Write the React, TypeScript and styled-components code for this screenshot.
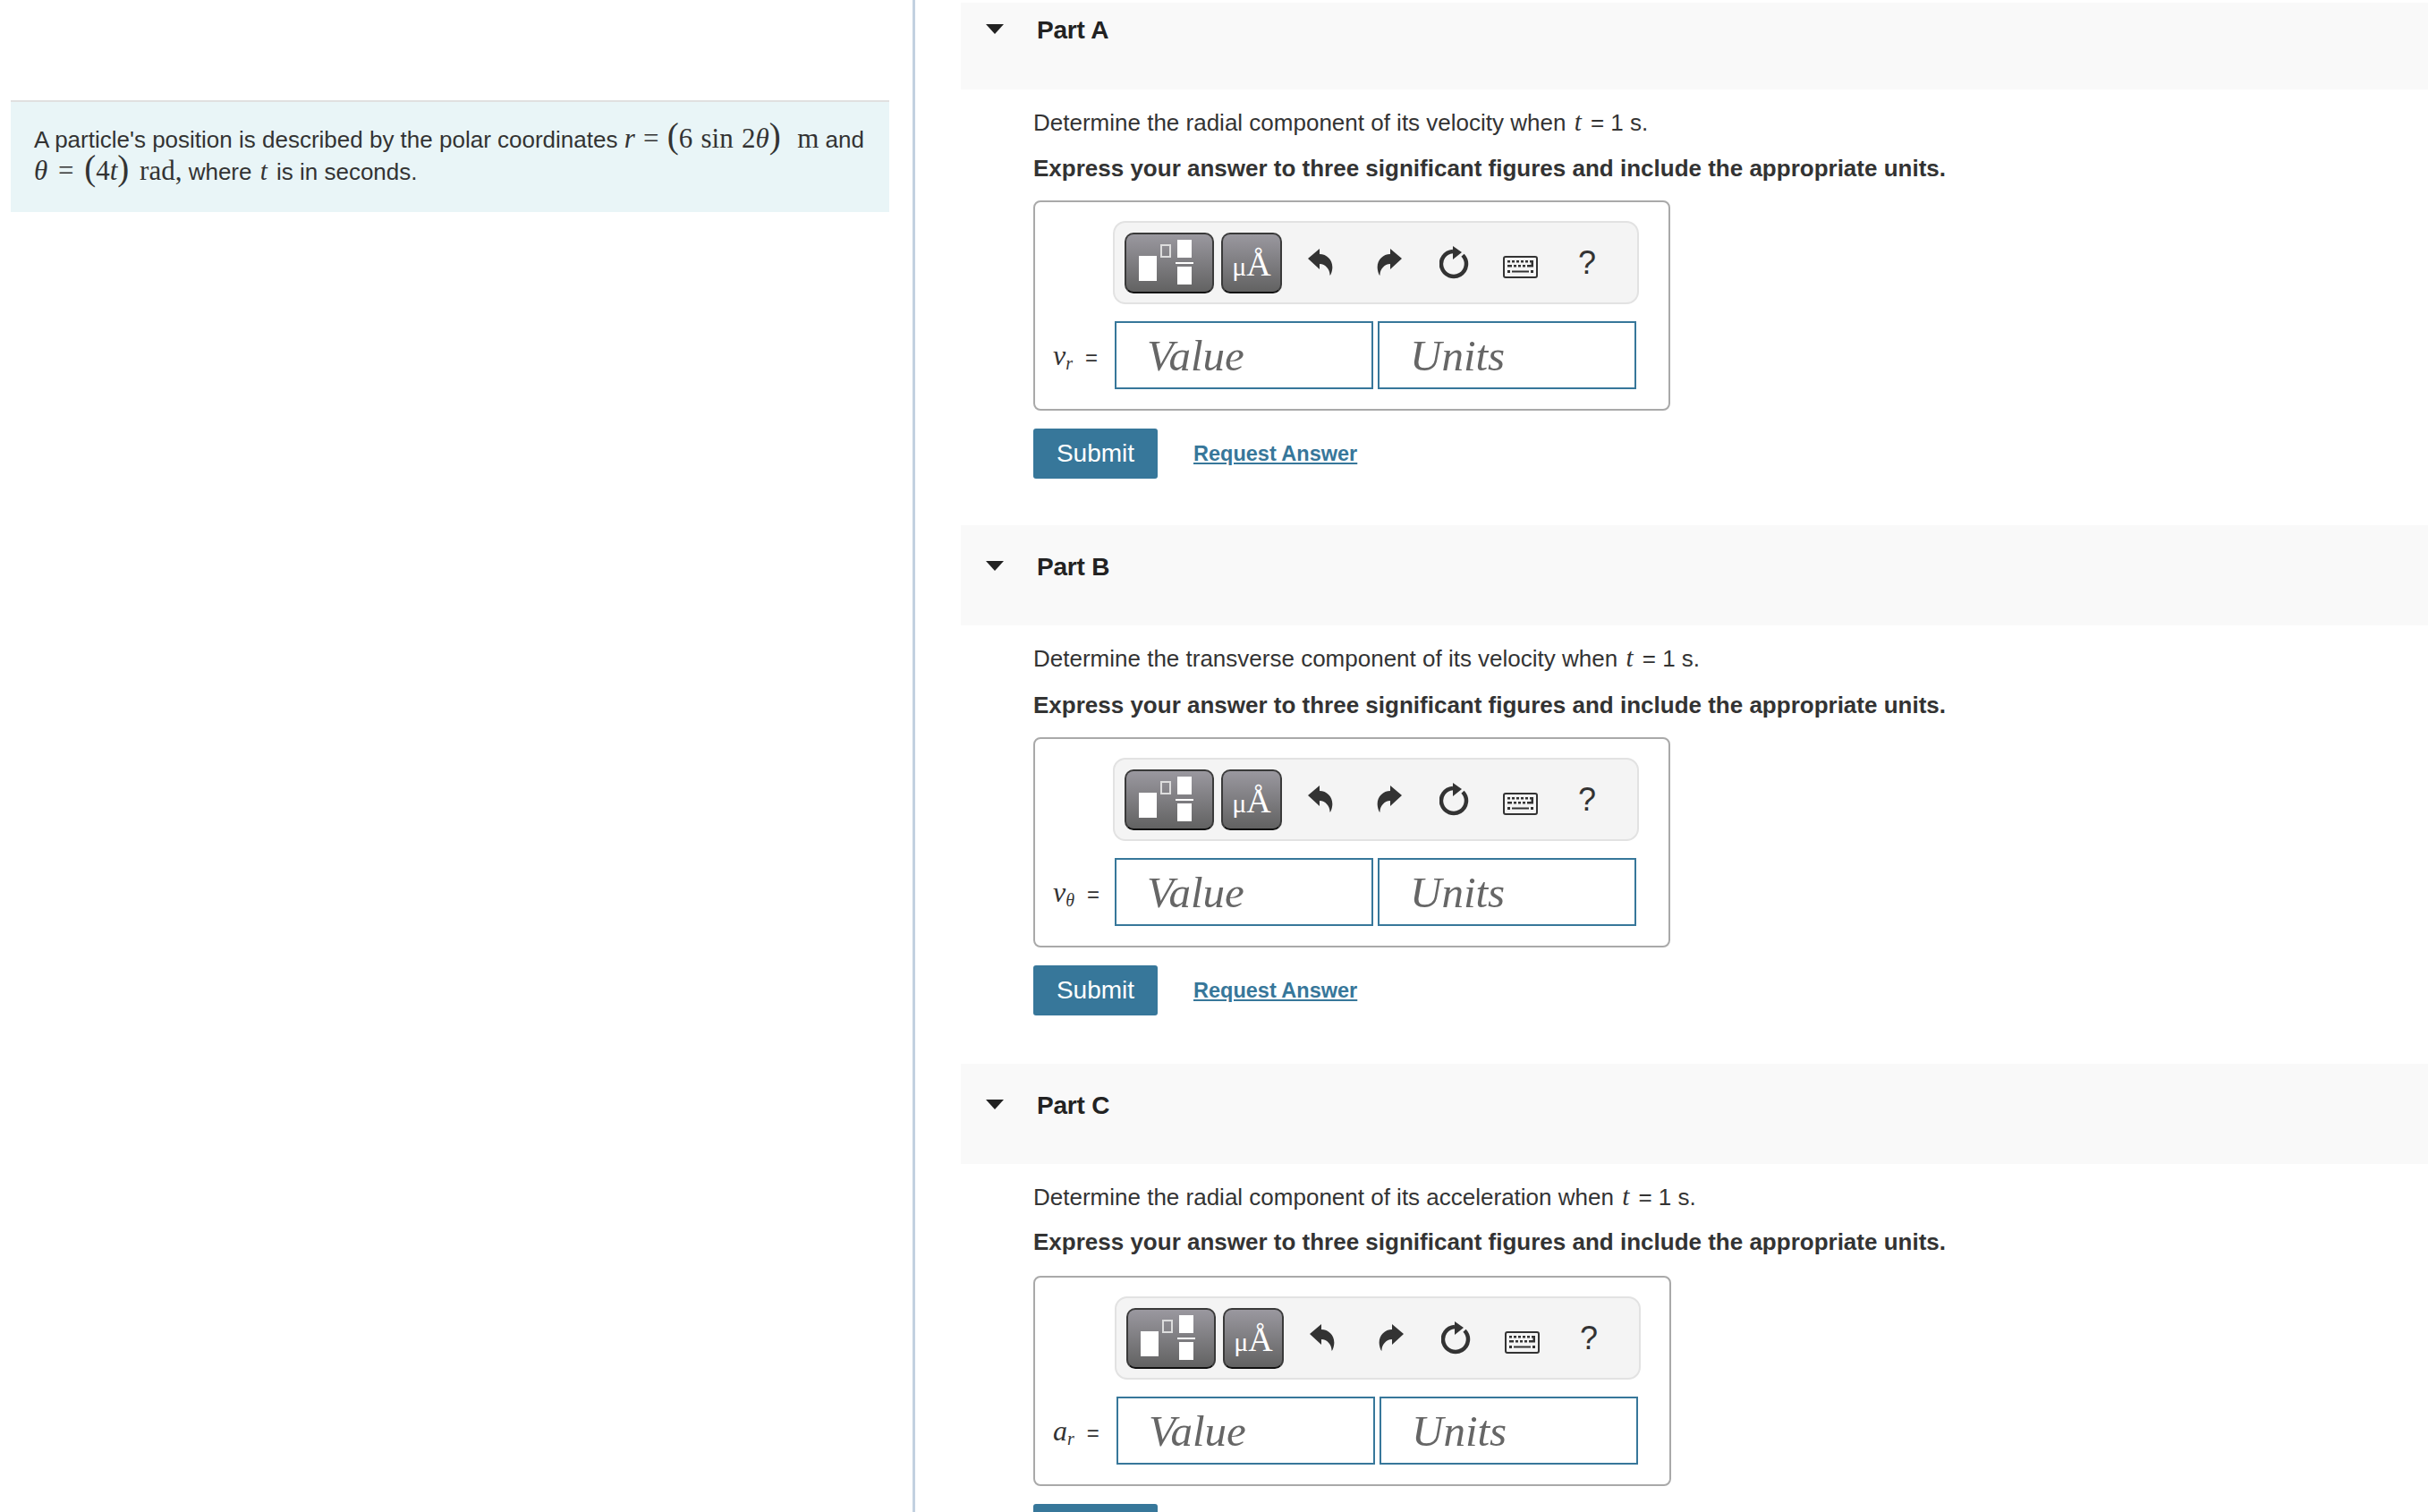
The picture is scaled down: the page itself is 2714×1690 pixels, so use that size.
import React from 'react';
import styled, {createGlobalStyle} from 'styled-components';

const GlobalStyle = createGlobalStyle`
  html, body {
    margin: 0;
    padding: 0;
    background: #fff;
  }
  body {
    font-family: "Liberation Sans", Arial, sans-serif;
    color: #333;
  }
`

const Page = styled.div`
  display: flex;
  width: 2714px;
  height: 1690px;
  overflow: hidden;
`
const LeftPane = styled.div`
  box-sizing: border-box;
  width: 1023px;
  flex: none;
  padding: 112px 26px 0 12px;
  border-right: 3px solid #c3d1e0;
`
const Intro = styled.div`
  box-sizing: border-box;
  height: 125px;
  padding: 24px 0 0 26px;
  background: #e9f5f7;
  border-top: 2px solid #e0e0e0;
  font-size: 26px;
  line-height: 36px;
  color: #333;
`
const IntroLine = styled.div`
  white-space: nowrap;
`
const MathText = styled.span<{$spacing: number}>`
  font-family: "Liberation Serif", "Times New Roman", serif;
  font-size: 31px;
  line-height: 0;
  word-spacing: ${p => p.$spacing}px;
`
const Var = styled.i`
  font-family: "Liberation Serif", "Times New Roman", serif;
  font-size: 29px;
  line-height: 0;
  margin: 0 3px 0 2px;
`
const Paren = styled.span`
  font-size: 39px;
  font-weight: 300;
  line-height: 0;
`
const RightPane = styled.div`
  flex: 1;
  padding: 3px 0 0 51px;
`
const Section = styled.section<{$after: number}>`
  padding-bottom: ${p => p.$after}px;
`
const PartHeader = styled.div<{$first?: boolean}>`
  box-sizing: border-box;
  display: flex;
  height: ${p => (p.$first ? 97 : 112)}px;
  padding: ${p => (p.$first ? 13 : 29)}px 0 0 28px;
  background: #f9f9f9;
`
const Caret = styled.span`
  width: 0;
  height: 0;
  margin: 11px 37px 0 0;
  border-style: solid;
  border-width: 11px 10.5px 0;
  border-color: #222 transparent transparent;
`
const PartTitle = styled.h2`
  margin: 0;
  font-size: 28px;
  line-height: 36px;
  font-weight: 700;
  color: #222;
  letter-spacing: -0.2px;
`
const PartBody = styled.div`
  padding: 19px 0 0 81px;
`
const Question = styled.p`
  margin: 0;
  font-size: 26px;
  line-height: 36px;
  color: #333;
  white-space: nowrap;
`
const Instruction = styled.p<{$gap: number}>`
  margin: ${p => p.$gap}px 0 0;
  font-size: 26px;
  line-height: 36px;
  font-weight: 700;
  color: #333;
  white-space: nowrap;
`
const AnswerBox = styled.div<{$gap: number; $extra?: number}>`
  box-sizing: border-box;
  display: flex;
  flex-direction: column;
  align-items: flex-end;
  width: ${p => 712 + (p.$extra ?? 0)}px;
  height: 235px;
  margin-top: ${p => p.$gap}px;
  padding: 21px ${p => 33 - (p.$extra ?? 0)}px 0 0;
  background: #fff;
  border: 2px solid #a9a9a9;
  border-radius: 8px;
`
const Toolbar = styled.div`
  box-sizing: border-box;
  display: flex;
  align-items: center;
  width: 588px;
  height: 93px;
  padding: 0 0 0 11px;
  background: #f4f4f4;
  border: 2px solid #e2e2e2;
  border-radius: 14px;
`
const ToolButton = styled.button<{$w: number; $mr: number}>`
  box-sizing: border-box;
  display: flex;
  align-items: center;
  justify-content: center;
  width: ${p => p.$w}px;
  height: 68px;
  margin-right: ${p => p.$mr}px;
  padding: 0;
  background: linear-gradient(#9a989f, #626262);
  border: 2px solid #3a3a3a;
  border-bottom-color: #111;
  border-radius: 10px;
`
const UnitGlyphs = styled.span`
  font-family: "Liberation Serif", "Times New Roman", serif;
  color: #fff;
  line-height: 1;
  margin-top: 2px;
`
const Mu = styled.span`
  font-size: 30px;
`
const Angstrom = styled.span`
  font-size: 38px;
`
const IconSlot = styled.span<{$w: number; $dy?: number}>`
  display: flex;
  align-items: center;
  justify-content: center;
  width: ${p => p.$w}px;
  margin-top: ${p => p.$dy ?? 0}px;
  color: #333;
`
const HelpMark = styled.span`
  font-size: 36px;
  line-height: 36px;
  color: #333;
`
const InputRow = styled.div`
  display: flex;
  align-items: center;
  gap: 5px;
  align-self: stretch;
  margin-top: 19px;
  margin-right: 3px;
`
const Label = styled.span`
  flex: 1;
  padding-left: 20px;
  font-size: 24px;
  white-space: nowrap;
  color: #333;
`
const Sym = styled.i`
  font-family: "Liberation Serif", "Times New Roman", serif;
  font-size: 32px;
`
const Sub = styled.i`
  font-family: "Liberation Serif", "Times New Roman", serif;
  font-size: 20px;
  position: relative;
  top: 5px;
  margin-right: 14px;
`
const Field = styled.input`
  box-sizing: border-box;
  width: 289px;
  height: 76px;
  padding: 0 0 0 34px;
  border: 2px solid #37779a;
  border-radius: 0;
  outline: none;
  background: #fff;
  font-family: "Liberation Serif", "Times New Roman", serif;
  font-style: italic;
  font-size: 49px;
  color: #666;
  &::placeholder {
    color: #666;
    opacity: 1;
  }
`
const Actions = styled.div`
  display: flex;
  align-items: center;
  gap: 40px;
  margin-top: 20px;
`
const SubmitButton = styled.button`
  width: 139px;
  height: 56px;
  padding: 0;
  background: #37779a;
  border: none;
  border-radius: 3px;
  color: #fff;
  font-family: "Liberation Sans", Arial, sans-serif;
  font-size: 28px;
`
const RequestLink = styled.a`
  font-size: 23.5px;
  font-weight: 700;
  color: #37779a;
  text-decoration: underline;
`

const TemplatesIcon = () => (
    <svg width="68" height="52" viewBox="0 0 68 52">
        <rect x="0" y="18" width="20" height="28" fill="#fff"/>
        <rect x="25" y="6" width="10" height="13" fill="none" stroke="#ddd" strokeWidth="2"/>
        <rect x="43" y="0" width="16" height="20" fill="#fff"/>
        <rect x="41" y="25" width="20" height="2" fill="#fff"/>
        <rect x="43" y="30" width="16" height="20" fill="#fff"/>
    </svg>
)

const UndoIcon = ({flip}: {flip?: boolean}) => (
    <svg width="28" height="31" viewBox="0 0 28 31" style={flip ? {transform: 'scaleX(-1)'} : undefined}>
        <path
            d="M0 11 L13 0 V6 C22 6 29 14 27 24 C26.5 27 25 30 24.5 30 C25 24 20 17 13 17 V23 Z"
            fill="currentColor"
        />
    </svg>
)

const ResetIcon = () => (
    <svg width="33" height="37" viewBox="0 0 33 37">
        <path
            d="M15 6 A14 14 0 1 0 26 10.2"
            fill="none"
            stroke="currentColor"
            strokeWidth="4.5"
        />
        <path d="M15 0 L25 7 L15 15 Z" fill="currentColor"/>
    </svg>
)

const KeyboardIcon = () => (
    <svg width="39" height="25" viewBox="0 0 39 25">
        <rect x="1" y="1" width="37" height="23" rx="2" fill="none" stroke="currentColor" strokeWidth="2"/>
        <path
            d="M5 5h3v2.5H5zM10 5h3v2.5h-3zM15 5h3v2.5h-3zM20 5h3v2.5h-3zM25 5h3v2.5h-3zM30 5h4v7.5h-7v-2.5h4.5V7.5H30zM5 10h5v2.5H5zM12 10h3v2.5h-3zM17 10h3v2.5h-3zM22 10h3v2.5h-3zM5 16h3v3H5zM10 16.5h19v2H10zM31 16h3v3h-3z"
            fill="currentColor"
        />
    </svg>
)

type PartData = {
    name: string
    question: string
    symbol: string
    sub: string
    first?: boolean
    bottom: number
    instructionGap: number
    boxGap: number
    extra?: number
}

const parts: PartData[] = [
    {name: 'Part A', question: 'Determine the radial component of its velocity when ', symbol: 'v', sub: 'r', first: true, bottom: 52, instructionGap: 15, boxGap: 18},
    {name: 'Part B', question: 'Determine the transverse component of its velocity when ', symbol: 'v', sub: 'θ', bottom: 54, instructionGap: 16, boxGap: 18},
    {name: 'Part C', question: 'Determine the radial component of its acceleration when ', symbol: 'a', sub: 'r', bottom: 0, instructionGap: 14, boxGap: 20, extra: 1},
]

function Part({part}: {part: PartData}) {
    return (
        <Section $after={part.bottom}>
            <PartHeader $first={part.first}>
                <Caret/>
                <PartTitle>{part.name}</PartTitle>
            </PartHeader>
            <PartBody>
                <Question>{part.question}<Var>t</Var> = 1 s.</Question>
                <Instruction $gap={part.instructionGap}>
                    Express your answer to three significant figures and include the appropriate units.
                </Instruction>
                <AnswerBox $gap={part.boxGap} $extra={part.extra}>
                    <Toolbar>
                        <ToolButton $w={100} $mr={8}><TemplatesIcon/></ToolButton>
                        <ToolButton $w={68} $mr={4}>
                            <UnitGlyphs><Mu>μ</Mu><Angstrom>Å</Angstrom></UnitGlyphs>
                        </ToolButton>
                        <IconSlot $w={77}><UndoIcon/></IconSlot>
                        <IconSlot $w={77}><UndoIcon flip/></IconSlot>
                        <IconSlot $w={68}><ResetIcon/></IconSlot>
                        <IconSlot $w={80} $dy={10}><KeyboardIcon/></IconSlot>
                        <IconSlot $w={70}><HelpMark>?</HelpMark></IconSlot>
                    </Toolbar>
                    <InputRow>
                        <Label><Sym>{part.symbol}</Sym><Sub>{part.sub}</Sub>=</Label>
                        <Field placeholder="Value" readOnly/>
                        <Field placeholder="Units" readOnly/>
                    </InputRow>
                </AnswerBox>
                <Actions>
                    <SubmitButton>Submit</SubmitButton>
                    <RequestLink href="#">Request Answer</RequestLink>
                </Actions>
            </PartBody>
        </Section>
    )
}

function App() {
    return (
        <Page>
            <GlobalStyle/>
            <LeftPane>
                <Intro>
                    <IntroLine>
                        A particle's position is described by the polar coordinates{' '}
                        <MathText $spacing={1.5}><i>r</i> = <Paren>(</Paren>6 sin 2<i>θ</i><Paren>)</Paren>&nbsp; m</MathText> and
                    </IntroLine>
                    <IntroLine>
                        <MathText $spacing={4}><i>θ</i> = <Paren>(</Paren>4<i>t</i><Paren>)</Paren> rad,</MathText> where <Var>t</Var> is in seconds.
                    </IntroLine>
                </Intro>
            </LeftPane>
            <RightPane>
                {parts.map(part => <Part key={part.name} part={part}/>)}
            </RightPane>
        </Page>
    );
}

export default App;
